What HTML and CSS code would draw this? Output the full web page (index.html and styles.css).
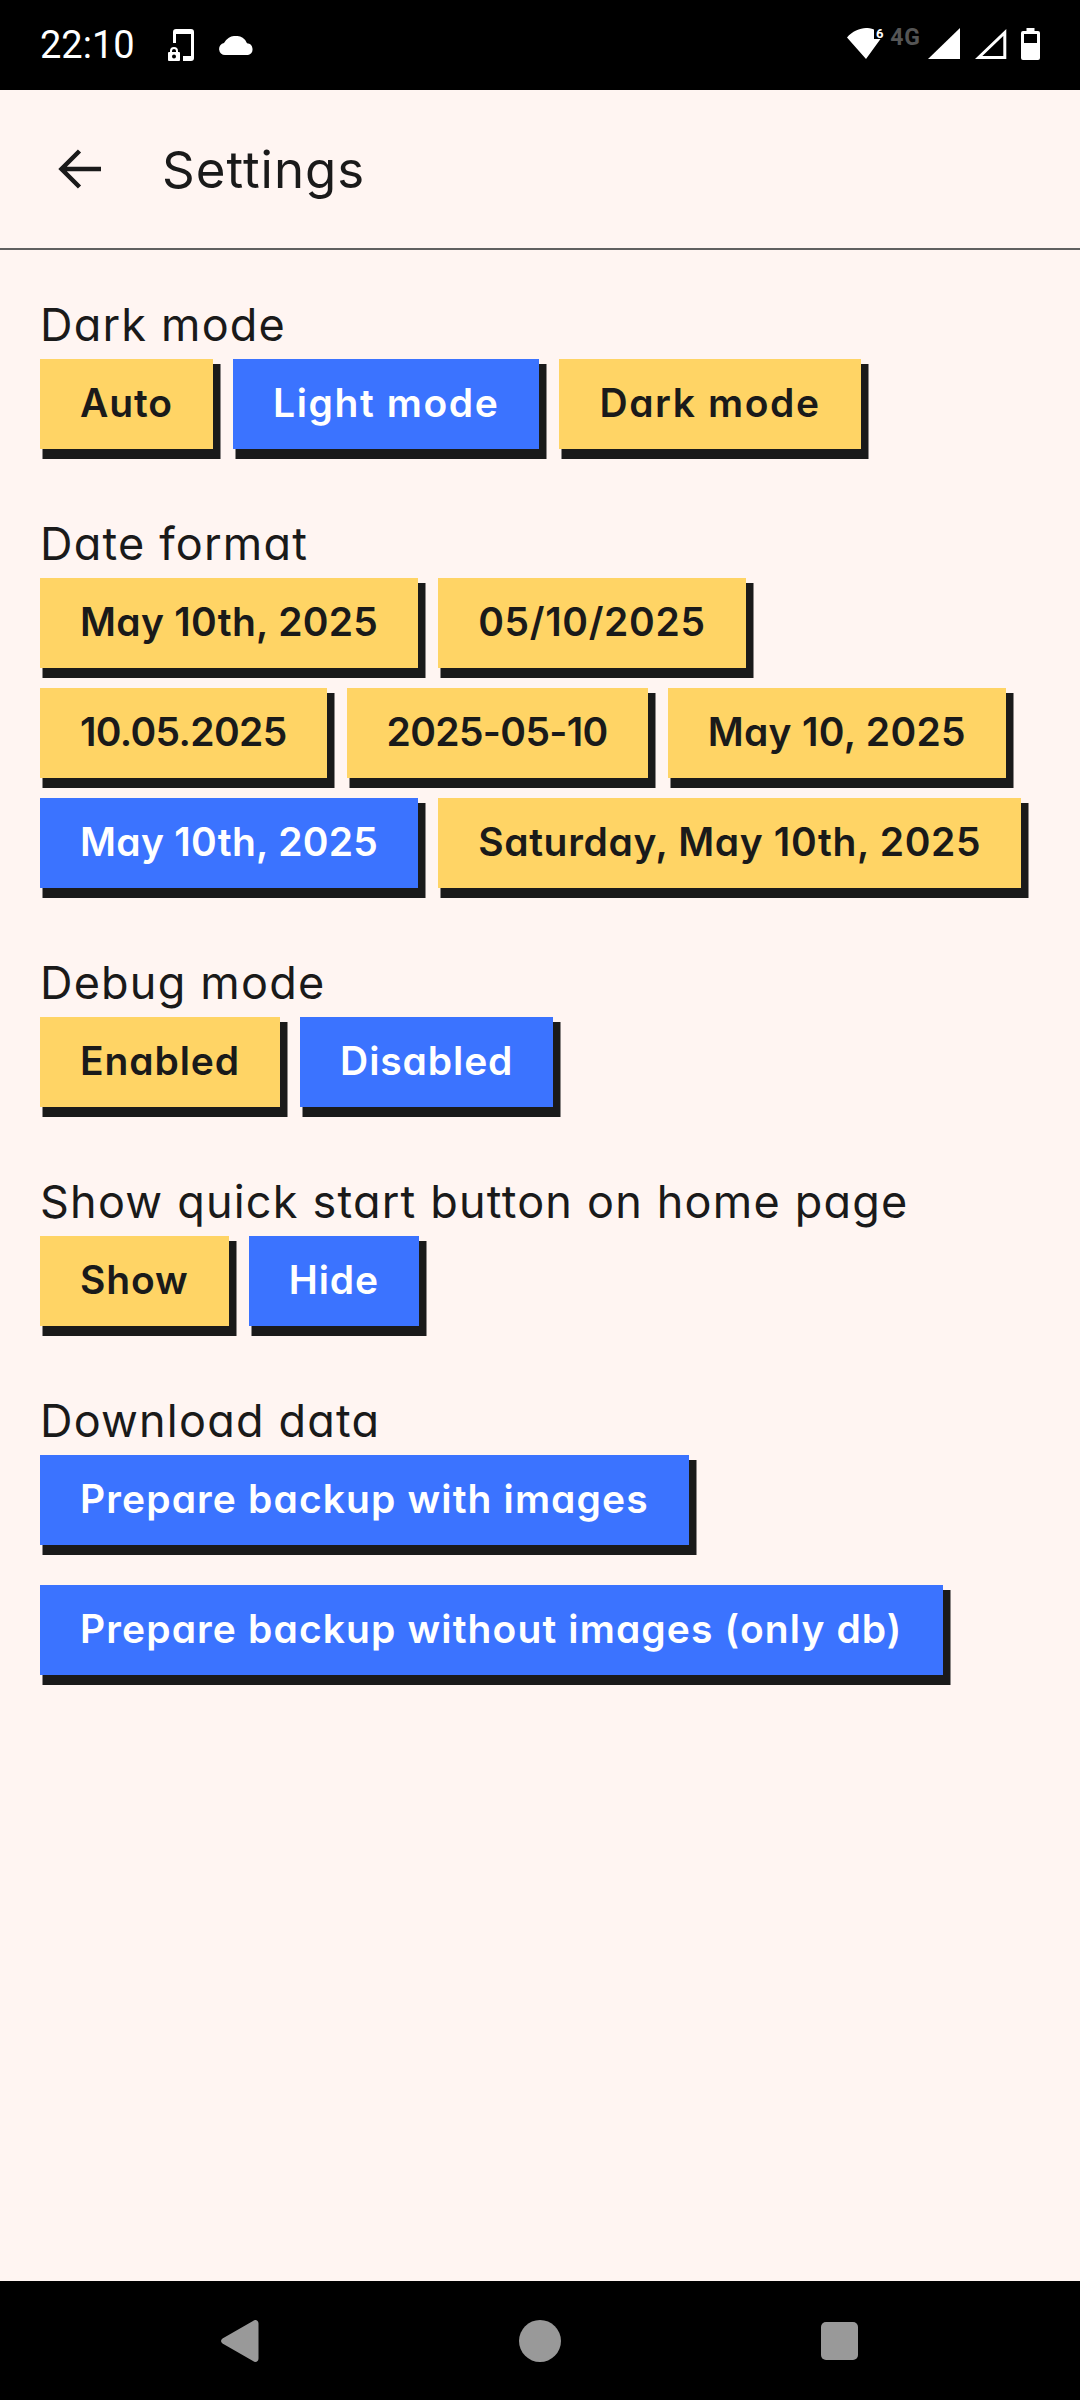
FILE: index.html
```html
<!DOCTYPE html>
<html lang="en">
<head>
  <meta charset="UTF-8">
  <title>Settings</title>
  <link rel="stylesheet" href="styles.css">
</head>
<body>
  <div class="status-bar">
    <span class="clock">22:10</span>
    <svg class="phone-lock" width="26" height="32" viewBox="0 0 26 32">
      <path fill="#fff" d="M5 14V3a3 3 0 0 1 3-3h15a3 3 0 0 1 3 3v26a3 3 0 0 1-3 3h-8v-5h8V5H8v9z"/>
      <path fill="#fff" fill-rule="evenodd" d="M2 23v-1a4 4 0 0 1 8 0v1h1a1 1 0 0 1 1 1v7a1 1 0 0 1-1 1H1a1 1 0 0 1-1-1v-7a1 1 0 0 1 1-1zm2 0h4v-1a2 2 0 0 0-4 0zm2 2.500a2 2 0 1 0 0 4 2 2 0 0 0 0-4z"/>
    </svg>
    <svg class="cloud" width="35" height="19" viewBox="0 0 35 19">
      <path fill="#fff" d="M6 19a6 6 0 0 1-1-11.900A12 12 0 0 1 17 0a11 11 0 0 1 11 7.200A6 6 0 0 1 29 19z"/>
    </svg>
    <div class="status-right">
      <svg class="wifi" width="38" height="34" viewBox="0 -3 38 34">
        <path fill="#fff" d="M0 9.500C5 3.500 13 0 19 0c2 0 5 .4 8 1.500V11h6.500L19 31z"/>
        <text class="wifi-six" x="29" y="10">6</text>
      </svg>
      <span class="network">4G</span>
      <svg class="signal" width="32" height="31" viewBox="0 0 32 31"><path fill="#fff" d="M32 0v31H0z"/></svg>
      <svg class="signal" width="32" height="31" viewBox="0 0 32 31"><path fill="none" stroke="#fff" stroke-width="3" d="M29.800 4.500v25H3.700z"/></svg>
      <svg class="battery" width="19" height="32" viewBox="0 0 19 32">
        <path fill="#fff" fill-rule="evenodd" d="M5.500 0h8v3h3.500a2 2 0 0 1 2 2v25a2 2 0 0 1-2 2H2a2 2 0 0 1-2-2V5a2 2 0 0 1 2-2h3.500zM3 6v9h13V6z"/>
      </svg>
    </div>
  </div>

  <header class="app-bar">
    <svg class="back-arrow" width="43" height="40" viewBox="0 0 43 40">
      <path fill="none" stroke="#1a1a1a" stroke-width="4.500" d="M43 20H4M21.500 2 3.500 20l18 18"/>
    </svg>
    <h1 class="app-title">Settings</h1>
  </header>

  <main class="settings">
    <section class="group">
      <h2 class="group-label">Dark mode</h2>
      <div class="options">
        <button class="opt">Auto</button>
        <button class="opt mode on">Light mode</button>
        <button class="opt mode">Dark mode</button>
      </div>
    </section>

    <section class="group">
      <h2 class="group-label">Date format</h2>
      <div class="options">
        <button class="opt date">May 10th, 2025</button>
        <button class="opt date-wide">05/10/2025</button>
      </div>
      <div class="options">
        <button class="opt digits">10.05.2025</button>
        <button class="opt digits">2025-05-10</button>
        <button class="opt date">May 10, 2025</button>
      </div>
      <div class="options">
        <button class="opt date on">May 10th, 2025</button>
        <button class="opt date-wide">Saturday, May 10th, 2025</button>
      </div>
    </section>

    <section class="group">
      <h2 class="group-label">Debug mode</h2>
      <div class="options">
        <button class="opt">Enabled</button>
        <button class="opt on">Disabled</button>
      </div>
    </section>

    <section class="group">
      <h2 class="group-label">Show quick start button on home page</h2>
      <div class="options">
        <button class="opt">Show</button>
        <button class="opt on">Hide</button>
      </div>
    </section>

    <section class="group">
      <h2 class="group-label">Download data</h2>
      <div class="options">
        <button class="opt long on">Prepare backup with images</button>
      </div>
      <div class="options wide-gap">
        <button class="opt long on">Prepare backup without images (only db)</button>
      </div>
    </section>
  </main>

  <nav class="nav-bar">
    <svg width="38" height="42" viewBox="0 0 38 42"><path fill="#999" d="M37.500 3.500v35c0 3-3 4.500-5.500 2.500L1.500 23.500c-2-1.500-2-3.500 0-5L32 1c2.500-2 5.500-.5 5.500 2.500z"/></svg>
    <svg width="42" height="42" viewBox="0 0 42 42"><circle cx="21" cy="21" r="21" fill="#999"/></svg>
    <svg width="37" height="38" viewBox="0 0 37 38"><rect width="37" height="38" rx="5" fill="#999"/></svg>
  </nav>
</body>
</html>
```

FILE: styles.css
```css
* {
  box-sizing: border-box;
}

html, body {
  margin: 0;
  padding: 0;
}

body {
  display: flex;
  flex-direction: column;
  width: 1080px;
  height: 2400px;
  overflow: hidden;
  background: #fff5f2;
  color: #1a1a1a;
  font-family: "Inter", "Noto Sans", sans-serif;
  font-feature-settings: "cv11";
}

.status-bar {
  display: flex;
  align-items: center;
  flex: none;
  height: 90px;
  padding: 0 40px;
  background: #000;
  color: #fff;
}

.clock {
  font-family: "Roboto", sans-serif;
  font-size: 38px;
  margin-right: 33px;
}

.cloud {
  margin-left: 25px;
}

.status-right {
  display: flex;
  align-items: center;
  margin: 0 0 3px auto;
}

.wifi {
  margin-bottom: 3px;
}

.wifi-six {
  font-family: "Roboto", sans-serif;
  font-size: 13px;
  font-weight: 700;
  fill: #fff;
}

.network {
  margin: 0 7px 13px 5px;
  color: #555;
  font-family: "Roboto", sans-serif;
  font-size: 23px;
  font-weight: 700;
  letter-spacing: 1px;
}

.signal + .signal {
  margin-left: 15px;
}

.battery {
  margin-left: 14px;
}

.app-bar {
  display: flex;
  align-items: center;
  flex: none;
  height: 160px;
  padding: 0 0 0 58px;
  border-bottom: 2px solid #606060;
}

.back-arrow {
  margin-right: 61px;
}

.app-title {
  margin: 0;
  font-size: 51px;
  font-weight: 400;
  letter-spacing: 1px;
}

.settings {
  flex: 1;
  padding: 49px 40px 0;
}

.group {
  margin-bottom: 69px;
}

.group-label {
  margin: 0;
  padding-bottom: 8px;
  font-size: 45px;
  line-height: 52px;
  font-weight: 400;
  letter-spacing: 1.2px;
}

.options {
  display: flex;
  gap: 20px;
}

.options + .options {
  margin-top: 20px;
}

.options.wide-gap {
  margin-top: 40px;
}

.opt {
  height: 90px;
  padding: 0 40px 3px;
  border: 0;
  border-radius: 0;
  background: #ffd465;
  box-shadow: 5px 7.5px 0 2.5px #1a1a1a;
  color: #1a1a1a;
  font-family: inherit;
  font-feature-settings: inherit;
  font-size: 39px;
  font-weight: 600;
  letter-spacing: .9px;
  white-space: nowrap;
}

.opt.mode {
  letter-spacing: 1.6px;
}

.opt.long {
  letter-spacing: 1.12px;
}

.opt.date {
  letter-spacing: .3px;
}

.opt.date-wide {
  letter-spacing: .65px;
}

.opt.digits {
  letter-spacing: -.65px;
}

.opt.on {
  background: #3b73ff;
  color: #fff;
}

.nav-bar {
  display: flex;
  justify-content: space-between;
  align-items: center;
  flex: none;
  height: 119px;
  padding: 0 222px 0 221px;
  background: #000;
}
```
